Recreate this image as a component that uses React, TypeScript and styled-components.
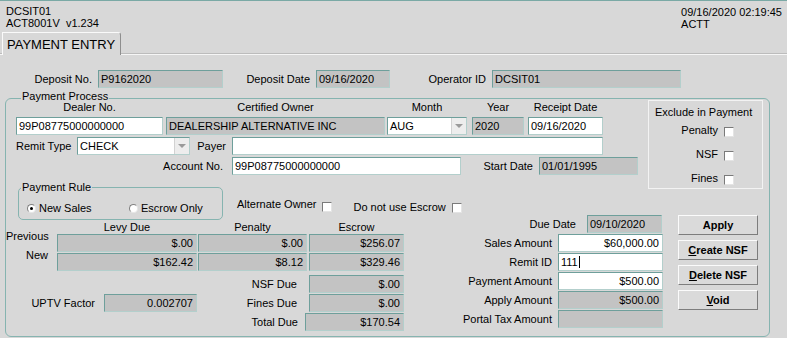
import styled, { createGlobalStyle } from "styled-components";

const GlobalStyle = createGlobalStyle`
  body {
    margin: 0;
    background: #d8d8d8;
  }
`;

// Page shell
const Screen = styled.div`
  width: 787px;
  height: 338px;
  box-sizing: border-box;
  overflow: hidden;
  background: #d8d8d8;
  border-top: 1px solid #7aa9a5;
  font-family: "Liberation Sans", Arial, sans-serif;
  font-size: 11px;
  color: #000;
`;

const Header = styled.div`
  display: flex;
  justify-content: space-between;
  align-items: flex-start;
  height: 28px;
  box-sizing: border-box;
  padding: 4px 5px 0 6px;
  line-height: 12px;
`;

const HeaderBlock = styled.div<{ $drop?: number }>`
  margin-top: ${(p) => p.$drop ?? 0}px;
  white-space: pre;
`;

const TabStrip = styled.div`
  margin-top: 3px;
  height: 23px;
  box-sizing: border-box;
  padding-left: 2px;
  display: flex;
  align-items: flex-end;
  border-bottom: 1px solid #f6f6f6;
  box-shadow: inset 0 -1px 0 #bcbcbc;
`;

const Tab = styled.div`
  position: relative;
  height: 23px;
  box-sizing: border-box;
  margin-bottom: -1px;
  padding: 4px 5px 0 4px;
  border-top: 1px solid #fafafa;
  border-left: 1px solid #fafafa;
  border-right: 1px solid #8e8e8e;
  border-top-right-radius: 3px;
  background: #d8d8d8;
  font-size: 13px;
  line-height: 16px;
`;

const Body = styled.div`
  padding: 15px 17px 0 5px;
`;

// Generic form parts
const Row = styled.div<{ $mt?: number; $pl?: number }>`
  display: flex;
  align-items: center;
  height: 18px;
  margin-top: ${(p) => p.$mt ?? 0}px;
  padding-left: ${(p) => p.$pl ?? 0}px;
`;

const Label = styled.span<{ $w?: number; $align?: "left" | "right"; $gap?: number }>`
  flex: none;
  width: ${(p) => (p.$w ? `${p.$w}px` : "auto")};
  text-align: ${(p) => p.$align ?? "right"};
  margin-right: ${(p) => p.$gap ?? 6}px;
  white-space: nowrap;
  line-height: 13px;
`;

const Field = styled.div<{ $w: number; $white?: boolean; $right?: boolean; $ml?: number }>`
  flex: none;
  width: ${(p) => p.$w}px;
  height: 18px;
  box-sizing: border-box;
  margin-left: ${(p) => p.$ml ?? 0}px;
  padding: 0 3px 0 2px;
  background: ${(p) => (p.$white ? "#ffffff" : "#c3c3c3")};
  border: 1px solid;
  border-color: #6e9f9b #b3cfcc #b3cfcc #6e9f9b;
  line-height: 16px;
  text-align: ${(p) => (p.$right ? "right" : "left")};
  white-space: nowrap;
  overflow: hidden;
`;

const SelectBox = styled(Field)`
  display: flex;
  padding-right: 0;
`;

const SelectText = styled.span`
  flex: 1;
`;

const DropArrow = styled.span`
  flex: none;
  width: 14px;
  display: flex;
  align-items: center;
  justify-content: center;
  background: #ededed;
  border-left: 1px solid #d2d2d2;

  &::after {
    content: "";
    border-left: 4px solid transparent;
    border-right: 4px solid transparent;
    border-top: 4px solid #9a9a9a;
  }
`;

const Caret = styled.span`
  display: inline-block;
  width: 1px;
  height: 12px;
  margin-left: 1px;
  background: #000;
  vertical-align: -2px;
`;

const Check = styled.span<{ $mt?: number; $ml?: number }>`
  flex: none;
  width: 10px;
  height: 10px;
  box-sizing: border-box;
  margin-top: ${(p) => p.$mt ?? 0}px;
  margin-left: ${(p) => p.$ml ?? 6}px;
  background: #ffffff;
  border: 1px solid;
  border-color: #7a7a7a #e4e4e4 #e4e4e4 #7a7a7a;
`;

// Payment Process frame
const Frame = styled.div`
  position: relative;
  margin-top: 10px;
  border: 1px solid #86b4b0;
  border-radius: 6px;
  padding-bottom: 5px;
`;

const Legend = styled.span<{ $top: number; $left: number }>`
  position: absolute;
  top: ${(p) => p.$top}px;
  left: ${(p) => p.$left}px;
  padding: 0 1px;
  background: #d8d8d8;
  line-height: 11px;
  white-space: nowrap;
`;

const TopSection = styled.div`
  display: flex;
  align-items: flex-start;
`;

const TopLeft = styled.div`
  flex: 1;
  padding-left: 10px;
  display: flex;
  flex-direction: column;
`;

const HeadRow = styled.div<{ $pl?: number; $h: number; $pt: number }>`
  display: flex;
  height: ${(p) => p.$h}px;
  box-sizing: border-box;
  padding-top: ${(p) => p.$pt}px;
  padding-left: ${(p) => p.$pl ?? 0}px;
`;

const Head = styled.span<{ $w: number; $ml?: number }>`
  flex: none;
  width: ${(p) => p.$w}px;
  margin-left: ${(p) => p.$ml ?? 0}px;
  text-align: center;
  line-height: 11px;
  white-space: nowrap;
`;

const ExcludeBox = styled.div`
  flex: none;
  width: 115px;
  height: 89px;
  box-sizing: border-box;
  margin: 1px 6px 0 0;
  padding: 5px 28px 0 6px;
  border: 1px solid #f3f3f3;
  line-height: 13px;
`;

const ExcludeTitle = styled.div`
  white-space: nowrap;
`;

const CheckLine = styled.div<{ $mt: number }>`
  display: flex;
  justify-content: flex-end;
  align-items: flex-start;
  margin-top: ${(p) => p.$mt}px;
  line-height: 13px;
`;

const OptionsRow = styled.div`
  display: flex;
  align-items: flex-start;
  margin-top: 12px;
  padding-left: 2px;
`;

const RuleFrame = styled.div`
  position: relative;
  flex: none;
  width: 205px;
  height: 33px;
  box-sizing: border-box;
  padding: 10px 0 0 8px;
  display: flex;
  border: 1px solid #86b4b0;
  border-radius: 5px;
`;

const RadioItem = styled.label<{ $w?: number }>`
  display: flex;
  align-items: center;
  gap: 3px;
  width: ${(p) => (p.$w ? `${p.$w}px` : "auto")};
  line-height: 13px;
  white-space: nowrap;
`;

const Radio = styled.span<{ $on?: boolean }>`
  position: relative;
  width: 9px;
  height: 9px;
  box-sizing: border-box;
  border-radius: 50%;
  background: #ffffff;
  border: 1px solid;
  border-color: #808080 #e6e6e6 #e6e6e6 #808080;

  &::after {
    content: "";
    display: ${(p) => (p.$on ? "block" : "none")};
    position: absolute;
    left: 2px;
    top: 2px;
    width: 3px;
    height: 3px;
    border-radius: 50%;
    background: #000;
  }
`;

const OptionItem = styled.div<{ $ml: number; $mt: number }>`
  display: flex;
  align-items: flex-start;
  margin-left: ${(p) => p.$ml}px;
  margin-top: ${(p) => p.$mt}px;
  line-height: 13px;
  white-space: nowrap;
`;

// Lower part
const LowerSection = styled.div`
  display: flex;
  align-items: flex-start;
  margin-top: -5px;
`;

const LowerLeft = styled.div`
  flex: none;
  width: 398px;
  display: flex;
  flex-direction: column;
`;

const AmountRow = styled.div<{ $mt?: number }>`
  display: flex;
  align-items: flex-start;
  height: 18px;
  margin-top: ${(p) => p.$mt ?? 0}px;
`;

const RowLabel = styled.span`
  flex: none;
  width: 42px;
  margin: -3px 9px 0 0;
  text-align: right;
  line-height: 11px;
`;

const RightFields = styled.div`
  flex: none;
  width: 259px;
  display: flex;
  flex-direction: column;
  gap: 1px;
`;

const Buttons = styled.div`
  flex: none;
  width: 80px;
  margin-left: 15px;
  display: flex;
  flex-direction: column;
  gap: 5px;
`;

const Button = styled.button`
  height: 20px;
  box-sizing: border-box;
  padding: 0;
  background: #dadada;
  border: 1px solid;
  border-color: #fbfbfb #7d7d7d #7d7d7d #fbfbfb;
  font-family: inherit;
  font-size: 11px;
  font-weight: bold;
  line-height: 18px;
  color: #000;
`;

export default function App() {
  return (
    <Screen>
      <GlobalStyle />
      <Header>
        <HeaderBlock>
          {"DCSIT01\nACT8001V  v1.234"}
        </HeaderBlock>
        <HeaderBlock $drop={1}>{"09/16/2020 02:19:45\nACTT"}</HeaderBlock>
      </Header>
      <TabStrip>
        <Tab>PAYMENT ENTRY</Tab>
      </TabStrip>

      <Body>
        <Row>
          <Label $w={87}>Deposit No.</Label>
          <Field $w={125}>P9162020</Field>
          <Label $w={87}>Deposit Date</Label>
          <Field $w={74}>09/16/2020</Field>
          <Label $w={96}>Operator ID</Label>
          <Field $w={189}>DCSIT01</Field>
        </Row>

        <Frame>
          <Legend $top={-8} $left={15}>Payment Process</Legend>
          <TopSection>
            <TopLeft>
              <HeadRow $h={18} $pt={3}>
                <Head $w={147}>Dealer No.</Head>
                <Head $w={219} $ml={3}>Certified Owner</Head>
                <Head $w={80} $ml={2}>Month</Head>
                <Head $w={52} $ml={5}>Year</Head>
                <Head $w={75} $ml={4}>Receipt Date</Head>
              </HeadRow>
              <Row>
                <Field $w={147} $white>99P08775000000000</Field>
                <Field $w={219} $ml={3}>DEALERSHIP ALTERNATIVE INC</Field>
                <SelectBox $w={80} $ml={2} $white>
                  <SelectText>AUG</SelectText>
                  <DropArrow />
                </SelectBox>
                <Field $w={52} $ml={5}>2020</Field>
                <Field $w={75} $ml={4} $white>09/16/2020</Field>
              </Row>
              <Row $mt={2}>
                <Label $w={55} $align="left">Remit Type</Label>
                <SelectBox $w={113} $white>
                  <SelectText>CHECK</SelectText>
                  <DropArrow />
                </SelectBox>
                <Label $w={36}>Payer</Label>
                <Field $w={371} $white />
              </Row>
              <Row $mt={2}>
                <Label $w={207} $gap={9}>Account No.</Label>
                <Field $w={229} $white>99P08775000000000</Field>
                <Label $w={72}>Start Date</Label>
                <Field $w={99}>01/01/1995</Field>
              </Row>
              <OptionsRow>
                <RuleFrame>
                  <Legend $top={-6} $left={2}>Payment Rule</Legend>
                  <RadioItem $w={102}>
                    <Radio $on />
                    New Sales
                  </RadioItem>
                  <RadioItem>
                    <Radio />
                    Escrow Only
                  </RadioItem>
                </RuleFrame>
                <OptionItem $ml={14} $mt={11}>
                  Alternate Owner
                  <Check $mt={4} />
                </OptionItem>
                <OptionItem $ml={21} $mt={14}>
                  Do not use Escrow
                  <Check $mt={2} />
                </OptionItem>
              </OptionsRow>
            </TopLeft>

            <ExcludeBox>
              <ExcludeTitle>Exclude in Payment</ExcludeTitle>
              <CheckLine $mt={5}>
                Penalty
                <Check $mt={3} />
              </CheckLine>
              <CheckLine $mt={11}>
                NSF
                <Check $mt={3} />
              </CheckLine>
              <CheckLine $mt={11}>
                Fines
                <Check $mt={3} />
              </CheckLine>
            </ExcludeBox>
          </TopSection>

          <LowerSection>
            <LowerLeft>
              <HeadRow $h={19} $pt={7} $pl={51}>
                <Head $w={140}>Levy Due</Head>
                <Head $w={109} $ml={1}>Penalty</Head>
                <Head $w={95} $ml={2}>Escrow</Head>
              </HeadRow>
              <AmountRow>
                <RowLabel>Previous</RowLabel>
                <Field $w={140} $right>$.00</Field>
                <Field $w={109} $ml={1} $right>$.00</Field>
                <Field $w={95} $ml={2} $right>$256.07</Field>
              </AmountRow>
              <AmountRow $mt={1}>
                <RowLabel>New</RowLabel>
                <Field $w={140} $right>$162.42</Field>
                <Field $w={109} $ml={1} $right>$8.12</Field>
                <Field $w={95} $ml={2} $right>$329.46</Field>
              </AmountRow>
              <Row $mt={4}>
                <Label $w={291} $gap={12}>NSF Due</Label>
                <Field $w={95} $right>$.00</Field>
              </Row>
              <Row $mt={1}>
                <Label $w={89} $gap={9}>UPTV Factor</Label>
                <Field $w={93} $right>0.002707</Field>
                <Label $w={100} $gap={12}>Fines Due</Label>
                <Field $w={95} $right>$.00</Field>
              </Row>
              <Row $mt={1}>
                <Label $w={292} $gap={7}>Total Due</Label>
                <Field $w={99} $right>$170.54</Field>
              </Row>
            </LowerLeft>

            <RightFields>
              <Row>
                <Label $w={172} $gap={11}>Due Date</Label>
                <Field $w={75}>09/10/2020</Field>
              </Row>
              <Row>
                <Label $w={148}>Sales Amount</Label>
                <Field $w={105} $white $right>$60,000.00</Field>
              </Row>
              <Row>
                <Label $w={148}>Remit ID</Label>
                <Field $w={105} $white>
                  111
                  <Caret />
                </Field>
              </Row>
              <Row>
                <Label $w={148}>Payment Amount</Label>
                <Field $w={105} $white $right>$500.00</Field>
              </Row>
              <Row>
                <Label $w={148}>Apply Amount</Label>
                <Field $w={105} $right>$500.00</Field>
              </Row>
              <Row>
                <Label $w={148}>Portal Tax Amount</Label>
                <Field $w={105} />
              </Row>
            </RightFields>

            <Buttons>
              <Button>Apply</Button>
              <Button>
                <u>C</u>reate NSF
              </Button>
              <Button>
                <u>D</u>elete NSF
              </Button>
              <Button>
                <u>V</u>oid
              </Button>
            </Buttons>
          </LowerSection>
        </Frame>
      </Body>
    </Screen>
  );
}
